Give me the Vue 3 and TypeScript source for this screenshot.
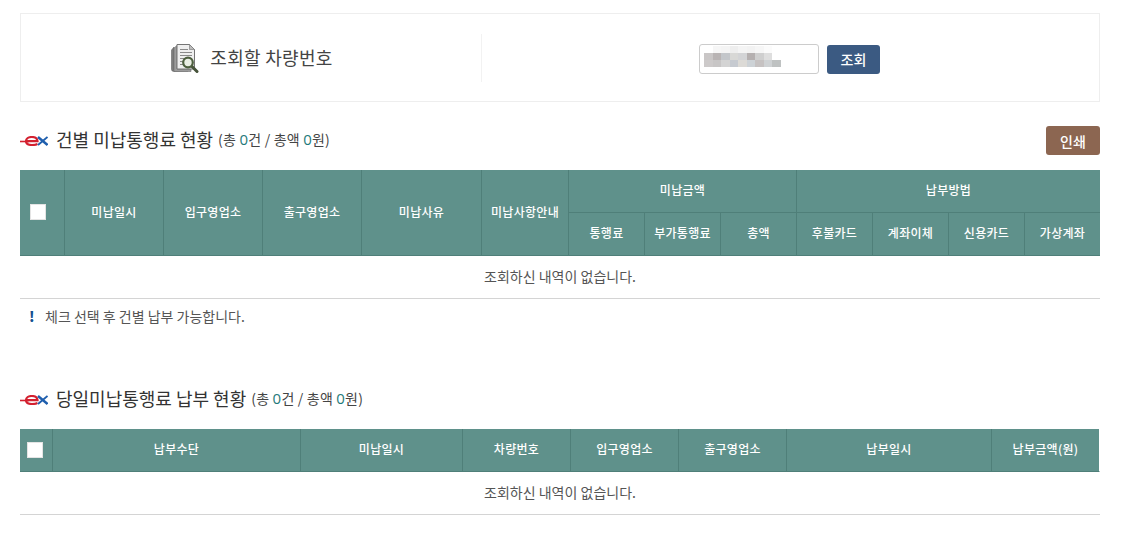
<script setup lang="ts">
const cols1: number[] = [45, 99, 99, 99, 120, 87, 76, 76, 76, 76, 76, 76, 75]
const cols2: number[] = [33, 248, 162, 108, 108, 108, 205, 108]
const heads2: string[] = ['납부수단', '미납일시', '차량번호', '입구영업소', '출구영업소', '납부일시', '납부금액(원)']
const rowA: string[] = ['#c9c6c6', '#b9b4b4', '#c3c6ca', '#d8d8d6', '#d3d4d6', '#b5b0b0', '#cfcfcf', '#dedede', '#ffffff']
const rowB: string[] = ['#cdcaca', '#c8c6c6', '#d4d4d4', '#c6cad0', '#dcdad6', '#cdd2d6', '#c6c2c2', '#cfd2d4', '#bfc2c2']
const rowT: string[] = ['#ffffff', '#f6f6f6', '#f4f4f4', '#eeeeee', '#f4f4f4', '#f2f2f2', '#f6f6f6', '#fbfbfb', '#ffffff']
const blur = [rowT, rowA, rowB]
</script>

<template>
  <div class="page">
    <div class="search">
      <div class="half left">
        <svg class="doc" width="28" height="30" viewBox="0 0 28 30">
          <path d="M0.500 6 L3 3 L3 26 L17 27 L3 27.500 Q0.500 27.500 0.500 25.500Z" fill="#7d7d7d" stroke="#666" stroke-width="0.600" />
          <path d="M3 4 L6 1.500 L6 25 L20 25 L20 27.500 L3 27.500Z" fill="#9c9c9c" stroke="#6f6f6f" stroke-width="0.600" />
          <path d="M6 0.500 L18.500 0.500 L23.500 5.500 L23.500 25 L6 25Z" fill="#efefef" stroke="#757575" stroke-width="1" />
          <path d="M18.500 0.500 L18.500 5.500 L23.500 5.500Z" fill="#bdbdbd" stroke="#757575" stroke-width="0.600" />
          <path d="M9 5.500H17M9 8.500H21M9 11.500H21M9 14.500H13M9 17.500H12M9 20.500H12" stroke="#8a8a8a" stroke-width="1.200" />
          <line x1="21" y1="22.500" x2="26" y2="27.500" stroke="#46533a" stroke-width="3" stroke-linecap="round" />
          <circle cx="17" cy="18.500" r="4.800" fill="#e9eee4" stroke="#4d5f3f" stroke-width="2.200" />
        </svg>
        <span class="search-label">조회할 차량번호</span>
      </div>
      <div class="half right">
        <div class="input">
          <div class="blur">
            <div v-for="(row, r) in blur" :key="r" class="blur-row">
              <i v-for="(c, i) in row" :key="i" class="blur-cell" :style="{ background: c }"></i>
            </div>
          </div>
        </div>
        <button class="btn navy" type="button">조회</button>
      </div>
    </div>

    <div class="heading first">
      <svg class="ex" width="28" height="10" viewBox="0 0 28 10">
        <path d="M0 5.500H9" stroke="#d3202f" stroke-width="1.600" />
        <path d="M7 5.200H17.500C17.200 2.200 14.500 1 11.800 1C8.500 1 6 2.800 6 5.200C6 7.800 8.800 9 12 9C14 9 16 8.700 17.500 8" fill="none" stroke="#d3202f" stroke-width="2.200" />
        <path d="M18 1L27.500 9" stroke="#1f5fae" stroke-width="2.400" />
        <path d="M27.500 1L18 9" stroke="#1f5fae" stroke-width="1.800" />
      </svg>
      <h2 class="title">건별 미납통행료 현황</h2>
      <span class="count">(총 <b>0</b>건 / 총액 <b>0</b>원)</span>
      <button class="btn brown" type="button">인쇄</button>
    </div>

    <table class="grid">
      <colgroup>
        <col v-for="(w, i) in cols1" :key="i" :style="{ width: w + 'px' }" />
      </colgroup>
      <thead>
        <tr>
          <th rowspan="2"><span class="check one"></span></th>
          <th rowspan="2">미납일시</th>
          <th rowspan="2">입구영업소</th>
          <th rowspan="2">출구영업소</th>
          <th rowspan="2">미납사유</th>
          <th rowspan="2">미납사항안내</th>
          <th colspan="3">미납금액</th>
          <th colspan="4">납부방법</th>
        </tr>
        <tr>
          <th>통행료</th>
          <th>부가통행료</th>
          <th>총액</th>
          <th>후불카드</th>
          <th>계좌이체</th>
          <th>신용카드</th>
          <th>가상계좌</th>
        </tr>
      </thead>
      <tbody>
        <tr><td colspan="13">조회하신 내역이 없습니다.</td></tr>
      </tbody>
    </table>

    <p class="note"><span class="bang">!</span>체크 선택 후 건별 납부 가능합니다.</p>

    <div class="heading second">
      <svg class="ex" width="28" height="10" viewBox="0 0 28 10">
        <path d="M0 5.500H9" stroke="#d3202f" stroke-width="1.600" />
        <path d="M7 5.200H17.500C17.200 2.200 14.500 1 11.800 1C8.500 1 6 2.800 6 5.200C6 7.800 8.800 9 12 9C14 9 16 8.700 17.500 8" fill="none" stroke="#d3202f" stroke-width="2.200" />
        <path d="M18 1L27.500 9" stroke="#1f5fae" stroke-width="2.400" />
        <path d="M27.500 1L18 9" stroke="#1f5fae" stroke-width="1.800" />
      </svg>
      <h2 class="title">당일미납통행료 납부 현황</h2>
      <span class="count">(총 <b>0</b>건 / 총액 <b>0</b>원)</span>
    </div>

    <table class="grid today">
      <colgroup>
        <col v-for="(w, i) in cols2" :key="i" :style="{ width: w + 'px' }" />
      </colgroup>
      <thead>
        <tr>
          <th><span class="check two"></span></th>
          <th v-for="h in heads2" :key="h">{{ h }}</th>
        </tr>
      </thead>
      <tbody>
        <tr><td colspan="8">조회하신 내역이 없습니다.</td></tr>
      </tbody>
    </table>
  </div>
</template>

<style scoped>
.page {
  width: 1080px;
  padding: 13px 0 0 20px;
  font-family: "Noto Sans CJK KR", "Noto Sans", sans-serif;
  color: #444;
}
.search {
  display: flex;
  height: 89px;
  box-sizing: border-box;
  border: 1px solid #eee;
  align-items: center;
}
.half {
  height: 48px;
  display: flex;
  align-items: center;
  justify-content: center;
  box-sizing: border-box;
}
.left {
  flex: 0 0 461px;
  border-right: 1px solid #f2f2f2;
  gap: 11px;
  padding-left: 2px;
}
.right {
  flex: 1 1 auto;
  gap: 8px;
  padding: 3px 2px 0 0;
}
.doc {
  display: block;
  margin-top: 3px;
}
.search-label {
  font-size: 18px;
  letter-spacing: 0.3px;
  color: #444;
  margin-bottom: 1px;
}
.input {
  width: 120px;
  height: 30px;
  box-sizing: border-box;
  border: 1px solid #ccc;
  border-radius: 3px;
  padding: 1px 0 0 4px;
  background: #fff;
}
.blur-row {
  display: flex;
}
.blur-cell {
  display: block;
  width: 8.500px;
  height: 7px;
}
.btn {
  border: 0;
  border-radius: 3px;
  width: 53px;
  height: 29px;
  padding: 0;
  color: #fff;
  font: 500 14px "Noto Sans CJK KR", sans-serif;
}
.navy {
  background: #3b5a82;
}
.brown {
  background: #8c6651;
  margin-left: auto;
  width: 54px;
}
.heading {
  display: flex;
  align-items: center;
  height: 29px;
}
.first {
  margin: 24px 0 15px;
}
.second {
  margin: 0 0 15px;
}
.ex {
  margin-right: 8px;
}
.title {
  margin: 0;
  padding-bottom: 4px;
  font-size: 18px;
  font-weight: 400;
  color: #333;
}
.count {
  margin-left: 5px;
  padding-bottom: 3px;
  font-size: 14px;
  letter-spacing: 0.2px;
  color: #444;
}
.count b {
  font-family: "Open Sans", sans-serif;
  font-size: 15px;
  font-weight: 400;
  color: #1f7a7a;
}
.grid {
  width: 1080px;
  table-layout: fixed;
  border-collapse: separate;
  border-spacing: 0;
  font-size: 12px;
  letter-spacing: 0.3px;
}
.grid th {
  height: 39px;
  padding: 0 0 3px;
  background: #5f918b;
  color: #fff;
  font-weight: 500;
  border-right: 1px solid #4f7f79;
  border-bottom: 1px solid #4f7f79;
  box-sizing: content-box;
}
.grid th:last-child {
  border-right: 0;
}
.grid thead tr:first-child th[colspan="4"] {
  border-right: 0;
}
.today th:last-child {
  border-right: 1px solid #fff;
}
.grid td {
  height: 40px;
  padding: 0 0 2px;
  text-align: center;
  border-bottom: 1px solid #d4d4d4;
  color: #555;
  font-size: 14px;
  letter-spacing: 0;
}
.check {
  display: inline-block;
  width: 16px;
  height: 16px;
  box-sizing: border-box;
  border: 1px solid #e4e4e4;
  background: #fff;
  vertical-align: middle;
}
.one {
  margin-right: 8px;
}
.two {
  margin-right: 2px;
}
.note {
  margin: 0;
  height: 86px;
  padding: 7px 0 0 9px;
  box-sizing: border-box;
  font-size: 14px;
  color: #555;
  line-height: 20px;
}
.bang {
  display: inline-block;
  width: 16px;
  color: #14508f;
  font-weight: 900;
}
</style>

<style>
html, body {
  background: #fff;
  overflow: hidden;
}
</style>
